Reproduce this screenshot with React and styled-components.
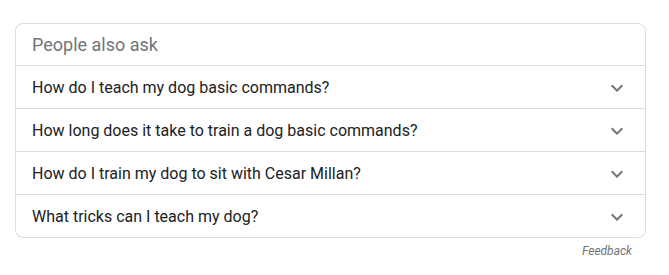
import React from "react";
import styled, { createGlobalStyle } from "styled-components";

const GlobalStyle = createGlobalStyle`
    body {
        margin: 0;
        background: #fff;
        font-family: Roboto, "Liberation Sans", Arial, sans-serif;
    }
`;

const questions = [
    "How do I teach my dog basic commands?",
    "How long does it take to train a dog basic commands?",
    "How do I train my dog to sit with Cesar Millan?",
    "What tricks can I teach my dog?",
];

const ExpandIcon = () => (
    <svg width="24" height="24" viewBox="0 0 24 24" fill="#70757a">
        <path d="M16.59 8.59L12 13.17 7.41 8.59 6 10l6 6 6-6z" />
    </svg>
);

const App = () => {
    return (
        <>
            <GlobalStyle />
            <Page>
                <Card>
                    <Header>People also ask</Header>
                    {questions.map((q) => (
                        <Row key={q}>
                            <Question>{q}</Question>
                            <IconBox>
                                <ExpandIcon />
                            </IconBox>
                        </Row>
                    ))}
                </Card>
                <Feedback>Feedback</Feedback>
            </Page>
        </>
    );
};

const Page = styled.div`
    padding: 23px 0 0 15px;
    width: 631px;
`;

const Card = styled.div`
    border: 1px solid #dadce0;
    border-radius: 8px;
    display: flex;
    flex-direction: column;
`;

const Header = styled.div`
    height: 41px;
    padding: 0 16px;
    display: flex;
    align-items: center;
    font-size: 18px;
    color: #70757a;
`;

const Row = styled.div`
    height: 42px;
    border-top: 1px solid #dadce0;
    padding: 0 16px;
    display: flex;
    align-items: center;
    justify-content: space-between;
    cursor: pointer;
`;

const Question = styled.div`
    font-size: 16px;
    color: #202124;
`;

const IconBox = styled.div`
    width: 24px;
    height: 24px;
    margin-top: 2px;
    display: flex;
`;

const Feedback = styled.div`
    text-align: right;
    padding-right: 14px;
    margin-top: 6px;
    font-size: 12px;
    font-style: italic;
    color: #70757a;
`;

export default App;
